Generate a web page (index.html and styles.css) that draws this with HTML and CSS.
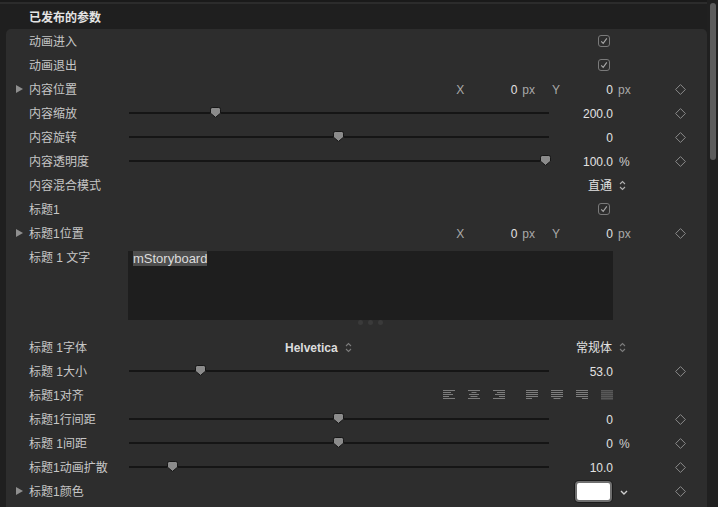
FILE: index.html
```html
<!DOCTYPE html>
<html>
<head>
<meta charset="utf-8">
<link rel="stylesheet" href="styles.css">
</head>
<body>
<div class="window">
  <div class="main">
    <div class="topbar"></div>
    <div class="header">已发布的参数</div>
    <div class="panel">

      <div class="row">
        <span class="tri-cell"></span><span class="label">动画进入</span>
        <div class="ctrl end"><svg class="check" width="12" height="12" viewBox="0 0 12 12"><rect x="0.5" y="0.5" width="11" height="11" rx="2.5" fill="none" stroke="#7a7a7a"/><path d="M3.2 6.3 L5.2 8.4 L8.8 3.4" fill="none" stroke="#a8a8a8" stroke-width="1.1"/></svg></div>
        <span class="unit"></span><span class="kf-cell"></span>
      </div>

      <div class="row">
        <span class="tri-cell"></span><span class="label">动画退出</span>
        <div class="ctrl end"><svg class="check" width="12" height="12" viewBox="0 0 12 12"><rect x="0.5" y="0.5" width="11" height="11" rx="2.5" fill="none" stroke="#7a7a7a"/><path d="M3.2 6.3 L5.2 8.4 L8.8 3.4" fill="none" stroke="#a8a8a8" stroke-width="1.1"/></svg></div>
        <span class="unit"></span><span class="kf-cell"></span>
      </div>

      <div class="row">
        <span class="tri-cell"><span class="tri"></span></span><span class="label">内容位置</span>
        <div class="ctrl end">
          <span class="axis">X</span><span class="num">0</span><span class="px">px</span>
          <span class="axis ygap">Y</span><span class="num">0</span>
        </div>
        <span class="unit"><span class="utxt">px</span></span>
        <span class="kf-cell"><svg width="11" height="11" viewBox="0 0 11 11"><path d="M5.5 0.6 L10.4 5.5 L5.5 10.4 L0.6 5.5 Z" fill="none" stroke="#8a8a8a"/></svg></span>
      </div>

      <div class="row">
        <span class="tri-cell"></span><span class="label">内容缩放</span>
        <div class="ctrl">
          <div class="slider"><div class="track"></div><svg class="knob" style="left:81px" width="11" height="11" viewBox="0 0 11 11"><path d="M2.2 0.5 H8.8 Q10.5 0.5 10.5 2.2 V6.2 L5.5 10.4 L0.5 6.2 V2.2 Q0.5 0.5 2.2 0.5 Z" fill="#8b8b8b" stroke="#161616"/></svg></div>
          <span class="val">200.0</span>
        </div>
        <span class="unit"></span>
        <span class="kf-cell"><svg width="11" height="11" viewBox="0 0 11 11"><path d="M5.5 0.6 L10.4 5.5 L5.5 10.4 L0.6 5.5 Z" fill="none" stroke="#8a8a8a"/></svg></span>
      </div>

      <div class="row">
        <span class="tri-cell"></span><span class="label">内容旋转</span>
        <div class="ctrl">
          <div class="slider"><div class="track"></div><svg class="knob" style="left:204px" width="11" height="11" viewBox="0 0 11 11"><path d="M2.2 0.5 H8.8 Q10.5 0.5 10.5 2.2 V6.2 L5.5 10.4 L0.5 6.2 V2.2 Q0.5 0.5 2.2 0.5 Z" fill="#8b8b8b" stroke="#161616"/></svg></div>
          <span class="val">0</span>
        </div>
        <span class="unit"></span>
        <span class="kf-cell"><svg width="11" height="11" viewBox="0 0 11 11"><path d="M5.5 0.6 L10.4 5.5 L5.5 10.4 L0.6 5.5 Z" fill="none" stroke="#8a8a8a"/></svg></span>
      </div>

      <div class="row">
        <span class="tri-cell"></span><span class="label">内容透明度</span>
        <div class="ctrl">
          <div class="slider"><div class="track"></div><svg class="knob" style="left:411px" width="11" height="11" viewBox="0 0 11 11"><path d="M2.2 0.5 H8.8 Q10.5 0.5 10.5 2.2 V6.2 L5.5 10.4 L0.5 6.2 V2.2 Q0.5 0.5 2.2 0.5 Z" fill="#8b8b8b" stroke="#161616"/></svg></div>
          <span class="val">100.0</span>
        </div>
        <span class="unit bright"><span class="utxt">%</span></span>
        <span class="kf-cell"><svg width="11" height="11" viewBox="0 0 11 11"><path d="M5.5 0.6 L10.4 5.5 L5.5 10.4 L0.6 5.5 Z" fill="none" stroke="#8a8a8a"/></svg></span>
      </div>

      <div class="row">
        <span class="tri-cell"></span><span class="label">内容混合模式</span>
        <div class="ctrl end"><span class="val popup">直通</span></div>
        <span class="unit"><svg class="updown" width="7" height="11" viewBox="0 0 7 11"><path d="M1 4 L3.5 1.5 L6 4 M1 7 L3.5 9.5 L6 7" fill="none" stroke="#b0b0b0" stroke-width="1.1"/></svg></span>
        <span class="kf-cell"></span>
      </div>

      <div class="row">
        <span class="tri-cell"></span><span class="label">标题1</span>
        <div class="ctrl end"><svg class="check" width="12" height="12" viewBox="0 0 12 12"><rect x="0.5" y="0.5" width="11" height="11" rx="2.5" fill="none" stroke="#7a7a7a"/><path d="M3.2 6.3 L5.2 8.4 L8.8 3.4" fill="none" stroke="#a8a8a8" stroke-width="1.1"/></svg></div>
        <span class="unit"></span><span class="kf-cell"></span>
      </div>

      <div class="row">
        <span class="tri-cell"><span class="tri"></span></span><span class="label">标题1位置</span>
        <div class="ctrl end">
          <span class="axis">X</span><span class="num">0</span><span class="px">px</span>
          <span class="axis ygap">Y</span><span class="num">0</span>
        </div>
        <span class="unit"><span class="utxt">px</span></span>
        <span class="kf-cell"><svg width="11" height="11" viewBox="0 0 11 11"><path d="M5.5 0.6 L10.4 5.5 L5.5 10.4 L0.6 5.5 Z" fill="none" stroke="#8a8a8a"/></svg></span>
      </div>

      <div class="row tall">
        <span class="tri-cell"></span><span class="label">标题 1 文字</span>
        <div class="ctrl column">
          <div class="textbox"><span class="sel">mStoryboard</span></div>
          <div class="dots"><i></i><i></i><i></i></div>
        </div>
        <span class="unit"></span><span class="kf-cell"></span>
      </div>

      <div class="row">
        <span class="tri-cell"></span><span class="label">标题 1字体</span>
        <div class="ctrl">
          <span class="fontpop">Helvetica</span>
          <svg class="updown dim" width="7" height="11" viewBox="0 0 7 11"><path d="M1 4 L3.5 1.5 L6 4 M1 7 L3.5 9.5 L6 7" fill="none" stroke="#7c7c7c" stroke-width="1.1"/></svg>
          <span class="val popup">常规体</span>
        </div>
        <span class="unit"><svg class="updown" width="7" height="11" viewBox="0 0 7 11"><path d="M1 4 L3.5 1.5 L6 4 M1 7 L3.5 9.5 L6 7" fill="none" stroke="#7c7c7c" stroke-width="1.1"/></svg></span>
        <span class="kf-cell"></span>
      </div>

      <div class="row">
        <span class="tri-cell"></span><span class="label">标题 1大小</span>
        <div class="ctrl">
          <div class="slider"><div class="track"></div><svg class="knob" style="left:66px" width="11" height="11" viewBox="0 0 11 11"><path d="M2.2 0.5 H8.8 Q10.5 0.5 10.5 2.2 V6.2 L5.5 10.4 L0.5 6.2 V2.2 Q0.5 0.5 2.2 0.5 Z" fill="#8b8b8b" stroke="#161616"/></svg></div>
          <span class="val">53.0</span>
        </div>
        <span class="unit"></span>
        <span class="kf-cell"><svg width="11" height="11" viewBox="0 0 11 11"><path d="M5.5 0.6 L10.4 5.5 L5.5 10.4 L0.6 5.5 Z" fill="none" stroke="#8a8a8a"/></svg></span>
      </div>

      <div class="row">
        <span class="tri-cell"></span><span class="label">标题1对齐</span>
        <div class="ctrl end">
          <div class="aligns">
            <svg width="12" height="10" viewBox="0 0 12 10"><path d="M0 0.5H12M0 2.5H8M0 4.5H10M0 6.5H6M0 8.5H12" stroke="#7d7d7d"/></svg>
            <svg width="12" height="10" viewBox="0 0 12 10"><path d="M0 0.5H12M3.5 2.5H8.5M1 4.5H11M2.5 6.5H9.5M0 8.5H12" stroke="#7d7d7d"/></svg>
            <svg width="12" height="10" viewBox="0 0 12 10"><path d="M0 0.5H12M4 2.5H12M2 4.5H12M6 6.5H12M0 8.5H12" stroke="#7d7d7d"/></svg>
          </div>
          <div class="aligns">
            <svg width="12" height="10" viewBox="0 0 12 10"><path d="M0 0.5H12M0 2.5H12M0 4.5H12M0 6.5H12M0 8.5H6" stroke="#7d7d7d"/></svg>
            <svg width="12" height="10" viewBox="0 0 12 10"><path d="M0 0.5H12M0 2.5H12M0 4.5H12M0 6.5H12M2.5 8.5H9.5" stroke="#7d7d7d"/></svg>
            <svg width="12" height="10" viewBox="0 0 12 10"><path d="M0 0.5H12M0 2.5H12M0 4.5H12M0 6.5H12M6 8.5H12" stroke="#7d7d7d"/></svg>
            <svg width="12" height="10" viewBox="0 0 12 10"><rect x="0" y="0" width="12" height="10" fill="#444"/><path d="M0 0.5H12M0 2.5H12M0 4.5H12M0 6.5H12M0 8.5H12" stroke="#585858"/></svg>
          </div>
        </div>
        <span class="unit"></span><span class="kf-cell"></span>
      </div>

      <div class="row">
        <span class="tri-cell"></span><span class="label">标题1行间距</span>
        <div class="ctrl">
          <div class="slider"><div class="track"></div><svg class="knob" style="left:204px" width="11" height="11" viewBox="0 0 11 11"><path d="M2.2 0.5 H8.8 Q10.5 0.5 10.5 2.2 V6.2 L5.5 10.4 L0.5 6.2 V2.2 Q0.5 0.5 2.2 0.5 Z" fill="#8b8b8b" stroke="#161616"/></svg></div>
          <span class="val">0</span>
        </div>
        <span class="unit"></span>
        <span class="kf-cell"><svg width="11" height="11" viewBox="0 0 11 11"><path d="M5.5 0.6 L10.4 5.5 L5.5 10.4 L0.6 5.5 Z" fill="none" stroke="#8a8a8a"/></svg></span>
      </div>

      <div class="row">
        <span class="tri-cell"></span><span class="label">标题 1间距</span>
        <div class="ctrl">
          <div class="slider"><div class="track"></div><svg class="knob" style="left:204px" width="11" height="11" viewBox="0 0 11 11"><path d="M2.2 0.5 H8.8 Q10.5 0.5 10.5 2.2 V6.2 L5.5 10.4 L0.5 6.2 V2.2 Q0.5 0.5 2.2 0.5 Z" fill="#8b8b8b" stroke="#161616"/></svg></div>
          <span class="val">0</span>
        </div>
        <span class="unit bright"><span class="utxt">%</span></span>
        <span class="kf-cell"><svg width="11" height="11" viewBox="0 0 11 11"><path d="M5.5 0.6 L10.4 5.5 L5.5 10.4 L0.6 5.5 Z" fill="none" stroke="#8a8a8a"/></svg></span>
      </div>

      <div class="row">
        <span class="tri-cell"></span><span class="label">标题1动画扩散</span>
        <div class="ctrl">
          <div class="slider"><div class="track"></div><svg class="knob" style="left:38px" width="11" height="11" viewBox="0 0 11 11"><path d="M2.2 0.5 H8.8 Q10.5 0.5 10.5 2.2 V6.2 L5.5 10.4 L0.5 6.2 V2.2 Q0.5 0.5 2.2 0.5 Z" fill="#8b8b8b" stroke="#161616"/></svg></div>
          <span class="val">10.0</span>
        </div>
        <span class="unit"></span>
        <span class="kf-cell"><svg width="11" height="11" viewBox="0 0 11 11"><path d="M5.5 0.6 L10.4 5.5 L5.5 10.4 L0.6 5.5 Z" fill="none" stroke="#8a8a8a"/></svg></span>
      </div>

      <div class="row">
        <span class="tri-cell"><span class="tri"></span></span><span class="label">标题1颜色</span>
        <div class="ctrl end"><span class="swatch"></span></div>
        <span class="unit"><svg class="chev" width="8" height="5" viewBox="0 0 8 5"><path d="M1 1 L4 4 L7 1" fill="none" stroke="#cfcfcf" stroke-width="1.4"/></svg></span>
        <span class="kf-cell"><svg width="11" height="11" viewBox="0 0 11 11"><path d="M5.5 0.6 L10.4 5.5 L5.5 10.4 L0.6 5.5 Z" fill="none" stroke="#8a8a8a"/></svg></span>
      </div>

    </div>
  </div>
  <div class="scrollbar"><div class="thumb"></div></div>
</div>
</body>
</html>
```

FILE: styles.css
```css
* { box-sizing: border-box; }
html, body {
  margin: 0;
  padding: 0;
  background: #1f1f1f;
}
body {
  font-family: "Liberation Sans", "Noto Sans CJK SC", sans-serif;
  font-size: 12px;
  color: #c2c2c2;
}
.window {
  display: flex;
  width: 718px;
  height: 507px;
  overflow: hidden;
}
.main {
  width: 707px;
  display: flex;
  flex-direction: column;
}
.topbar {
  height: 4px;
  background: #1a1a1a;
  border-bottom: 2px solid #2c2c2c;
}
.header {
  height: 25px;
  line-height: 22px;
  padding-top: 3px;
  padding-left: 29px;
  background: #1f1f1f;
  color: #e4e4e4;
  font-weight: bold;
}
.panel {
  flex: 1;
  margin-left: 6px;
  background: #2d2d2d;
  border-radius: 5px 5px 0 0;
}
.row {
  display: grid;
  grid-template-columns: 23px 100px 484px 62px 11px;
  height: 24px;
  align-items: center;
}
.row.tall {
  height: 90px;
  align-items: start;
}
.tri-cell {
  display: flex;
  align-items: center;
  height: 24px;
  padding-left: 10px;
}
.tri {
  width: 0;
  height: 0;
  border-left: 7px solid #8f8f8f;
  border-top: 4.5px solid transparent;
  border-bottom: 4.5px solid transparent;
}
.label,
.val,
.num,
.axis,
.px,
.utxt,
.fontpop {
  height: 24px;
  line-height: 22px;
  padding-top: 2px;
}
.label {
  white-space: nowrap;
  color: #c6c6c6;
}
.ctrl {
  display: flex;
  align-items: center;
  height: 24px;
}
.ctrl.end {
  justify-content: flex-end;
}
.ctrl.column {
  flex-direction: column;
  align-items: stretch;
  height: auto;
}
.check {
  margin-right: 3px;
  display: block;
}
.axis {
  color: #a9a9a9;
  width: 8px;
  text-align: center;
}
.axis.ygap {
  margin-left: 17px;
}
.num {
  width: 53px;
  text-align: right;
  color: #e2e2e2;
}
.px {
  margin-left: 5px;
  color: #a9a9a9;
}
.unit {
  display: flex;
  align-items: center;
  height: 24px;
  padding-left: 5px;
  color: #a9a9a9;
}
.unit.bright {
  color: #cfcfcf;
  padding-left: 6px;
}
.kf-cell {
  display: flex;
  align-items: center;
  height: 24px;
}
.kf-cell svg {
  display: block;
}
.slider {
  position: relative;
  width: 420px;
  height: 12px;
  flex: none;
}
.track {
  position: absolute;
  left: 0;
  right: 0;
  top: 5px;
  height: 2px;
  background: #151515;
}
.knob {
  position: absolute;
  top: 0px;
  display: block;
}
.val {
  flex: 1;
  text-align: right;
  color: #e2e2e2;
  white-space: nowrap;
}
.popup {
  flex: none;
  margin-right: 1px;
}
.updown {
  display: block;
  margin-left: 1px;
}
.fontpop {
  margin-left: 156px;
  font-weight: bold;
  color: #dcdcdc;
}
.updown.dim {
  margin-left: 7px;
  margin-right: auto;
}
.textbox {
  margin-top: 6px;
  margin-left: -1px;
  height: 69px;
  background: #1e1e1e;
  padding-left: 5px;
  padding-top: 1px;
  line-height: 14px;
  font-size: 13px;
  color: #dcdcdc;
}
.sel {
  background: #4e4e4e;
}
.dots {
  display: flex;
  justify-content: center;
  gap: 5px;
  margin-left: -2px;
}
.dots i {
  display: block;
  width: 5px;
  height: 5px;
  border-radius: 50%;
  background: #3a3a3a;
}
.aligns {
  display: flex;
  gap: 13px;
}
.aligns + .aligns {
  margin-left: 21px;
}
.aligns svg {
  display: block;
}
.swatch {
  width: 37px;
  height: 21px;
  margin-right: 1px;
  background: #ffffff;
  border: 2px solid #6f6f6f;
  border-radius: 4px;
  box-shadow: 0 0 0 1px #1c1c1c;
}
.chev {
  display: block;
  margin-left: 2px;
  margin-top: 2px;
}
.scrollbar {
  width: 11px;
  background: #202020;
  padding: 3px 2px 0 3px;
}
.thumb {
  width: 6px;
  height: 157px;
  border-radius: 3px;
  background: #5c5c5c;
}
```
